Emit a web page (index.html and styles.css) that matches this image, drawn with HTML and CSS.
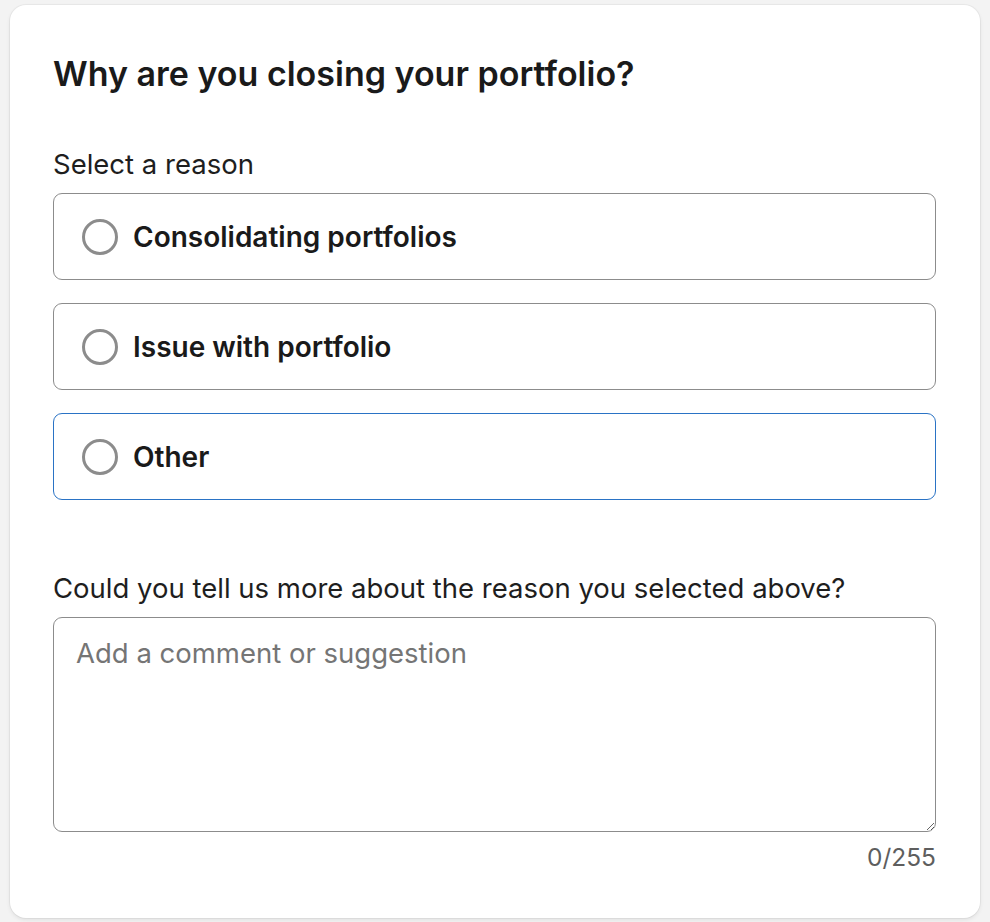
FILE: index.html
```html
<!DOCTYPE html>
<html lang="en">
<head>
<meta charset="utf-8">
<title>Close portfolio</title>
<link rel="stylesheet" href="styles.css">
</head>
<body>
<div class="page">
  <section class="card">
    <h1 class="title">Why are you closing your portfolio?</h1>
    <div class="field reasons-field">
      <div class="label" id="reason-label">Select a reason</div>
      <div class="reasons" role="radiogroup" aria-labelledby="reason-label">
        <label class="option">
          <input type="radio" name="reason" class="radio-input">
          <span class="radio"></span>
          <span class="option-text">Consolidating portfolios</span>
        </label>
        <label class="option">
          <input type="radio" name="reason" class="radio-input">
          <span class="radio"></span>
          <span class="option-text">Issue with portfolio</span>
        </label>
        <label class="option option-focus">
          <input type="radio" name="reason" class="radio-input">
          <span class="radio"></span>
          <span class="option-text">Other</span>
        </label>
      </div>
    </div>
    <div class="field comment">
      <label class="label" for="comment">Could you tell us more about the reason you selected above?</label>
      <textarea id="comment" class="textarea" placeholder="Add a comment or suggestion"></textarea>
      <div class="counter">0/255</div>
    </div>
  </section>
</div>
</body>
</html>
```

FILE: styles.css
```css
* { box-sizing: border-box; }
html, body { margin: 0; padding: 0; }
body {
  background: #f3f3f3;
  font-family: Inter, "Noto Sans", "Liberation Sans", sans-serif;
  color: #1e1e1e;
}
.page {
  padding: 5px 10px 4px 10px;
}
.card {
  background: #fff;
  border-radius: 16px;
  box-shadow: 0 0 0 1px rgba(0,0,0,0.04), 0 2px 4px rgba(0,0,0,0.08);
  height: 913px;
  padding: 47px 44px 0 43px;
}
.title {
  margin: 0;
  font-size: 34px;
  font-weight: 600;
  line-height: 44px;
  color: #1a1a1a;
}
.field {
  display: flex;
  flex-direction: column;
  gap: 12px;
}
.reasons-field { margin-top: 51px; }
.label {
  display: block;
  font-size: 27.5px;
  line-height: 34px;
  color: #1e1e1e;
}
.reasons {
  display: flex;
  flex-direction: column;
  gap: 23px;
}
.option {
  display: flex;
  align-items: center;
  height: 87px;
  border: 1px solid #8c8c8c;
  border-radius: 9px;
  padding: 0 0 0 28px;
  cursor: pointer;
}
.option-focus { border-color: #2a73c5; }
.radio-input {
  position: absolute;
  opacity: 0;
  width: 0;
  height: 0;
}
.radio {
  width: 36px;
  height: 36px;
  border: 3px solid #8c8c8c;
  border-radius: 50%;
  flex: none;
}
.option-text {
  margin-left: 15px;
  font-size: 28px;
  font-weight: 600;
  line-height: 34px;
  color: #1a1a1a;
}
.comment { margin-top: 71px; }
.textarea {
  display: block;
  width: 100%;
  height: 215px;
  border: 1px solid #8c8c8c;
  border-radius: 9px;
  padding: 18px 22px;
  font-family: inherit;
  font-size: 27.5px;
  line-height: 34px;
  color: #1e1e1e;
  resize: vertical;
  outline: none;
}
.textarea::placeholder { color: #757575; }
.counter {
  text-align: right;
  font-size: 24.5px;
  line-height: 30px;
  color: #5e5e5e;
  margin-top: -2px;
}
```
